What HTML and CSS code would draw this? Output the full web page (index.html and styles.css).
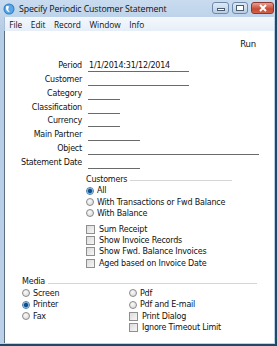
FILE: index.html
```html
<!DOCTYPE html>
<html>
<head>
<meta charset="utf-8">
<link rel="stylesheet" href="styles.css">
</head>
<body>
<div class="window">
  <div class="titlebar">
    <svg class="appicon" width="12" height="12" viewBox="0 0 12 12">
      <circle cx="6" cy="6" r="5.5" fill="#2f7fc8"/>
      <circle cx="6" cy="6" r="4.5" fill="#5aa6e6"/>
      <path d="M3.5 2.8 C2.2 5.5 3.4 9 7.2 9.3 C5.2 8 4.6 5.6 6.2 3.4 Z" fill="#ffffff"/>
    </svg>
    <span class="title">Specify Periodic Customer Statement</span>
    <div class="tbtns">
      <span class="tb tb-min"><i></i></span>
      <span class="tb tb-max"><i></i></span>
      <span class="tb tb-close">
        <svg width="10" height="8" viewBox="0 0 10 8"><path d="M2 1 L8 7 M8 1 L2 7" stroke="#fff" stroke-width="2"/></svg>
      </span>
    </div>
  </div>
  <div class="menubar">
    <span>File</span><span>Edit</span><span>Record</span><span>Window</span><span>Info</span>
  </div>
  <div class="client">
    <div class="toolbar"><span class="run">Run</span></div>
    <div class="form">
      <div class="row"><span class="lbl">Period</span><span class="fld w100">1/1/2014:31/12/2014</span></div>
      <div class="row"><span class="lbl">Customer</span><span class="fld w100"></span></div>
      <div class="row"><span class="lbl">Category</span><span class="fld w31"></span></div>
      <div class="row"><span class="lbl">Classification</span><span class="fld w31"></span></div>
      <div class="row"><span class="lbl">Currency</span><span class="fld w31"></span></div>
      <div class="row"><span class="lbl">Main Partner</span><span class="fld w52"></span></div>
      <div class="row"><span class="lbl">Object</span><span class="fld w171"></span></div>
      <div class="row"><span class="lbl">Statement Date</span><span class="fld w52"></span></div>
    </div>
    <div class="group cust">
      <div class="ghead"><span>Customers</span><i></i></div>
      <div class="opt"><span class="radio on"></span>All</div>
      <div class="opt"><span class="radio"></span>With Transactions or Fwd Balance</div>
      <div class="opt"><span class="radio"></span>With Balance</div>
      <div class="checks">
        <div class="opt"><span class="check"></span>Sum Receipt</div>
        <div class="opt"><span class="check"></span>Show Invoice Records</div>
        <div class="opt"><span class="check"></span>Show Fwd. Balance Invoices</div>
        <div class="opt"><span class="check"></span>Aged based on Invoice Date</div>
      </div>
    </div>
    <div class="group media">
      <div class="ghead"><span>Media</span><i></i></div>
      <div class="cols">
        <div class="col">
          <div class="opt"><span class="radio"></span>Screen</div>
          <div class="opt"><span class="radio on"></span>Printer</div>
          <div class="opt"><span class="radio"></span>Fax</div>
        </div>
        <div class="col">
          <div class="opt"><span class="radio"></span>Pdf</div>
          <div class="opt"><span class="radio"></span>Pdf and E-mail</div>
          <div class="opt"><span class="check"></span>Print Dialog</div>
          <div class="opt"><span class="check"></span>Ignore Timeout Limit</div>
        </div>
      </div>
    </div>
  </div>
</div>
</body>
</html>
```
FILE: styles.css
```css
* { box-sizing: border-box; }
html, body { margin: 0; padding: 0; }
body {
  width: 277px;
  height: 346px;
  overflow: hidden;
  font-family: Tahoma, "DejaVu Sans", sans-serif;
  font-size: 8px;
  letter-spacing: -0.2px;
  color: #111;
  background: #fff;
}
.window {
  width: 277px;
  height: 346px;
  background: linear-gradient(#c9dbef, #b6cde6 30px, #bcd1e8);
  border-right: 2px solid #1f4a66;
  border-bottom: 2px solid #1f4a66;
  display: flex;
  flex-direction: column;
  padding: 0 1px 1px 4px;
  position: relative;
}
.titlebar {
  height: 17px;
  display: flex;
  align-items: center;
  margin-left: -4px;
  padding-left: 3px;
}
.appicon { flex: none; }
.title {
  margin-left: 4px;
  font-family: "Open Sans", "DejaVu Sans", sans-serif;
  font-size: 8.8px;
  letter-spacing: -0.12px;
  color: #111;
}
.tbtns {
  margin-left: auto;
  display: flex;
  gap: 3px;
  align-self: flex-start;
  margin-top: 2px;
}
.tb {
  height: 12px;
  border: 1px solid #6f8aa8;
  border-radius: 3px;
  display: flex;
  align-items: center;
  justify-content: center;
  background: linear-gradient(#dfe9f5, #b9cde4);
}
.tb-min { width: 17px; }
.tb-min i { display: block; width: 8px; height: 3px; background: #fff; border: 1px solid #4a5d73; margin-top: 3px; }
.tb-max { width: 16px; }
.tb-max i { display: block; width: 8px; height: 6px; border: 1px solid #4a5d73; background: #fff; }
.tb-close { width: 23px; background: linear-gradient(#e8a08f, #c74a33 60%, #d0644a); border-color: #8a3a2d; }
.menubar {
  height: 14px;
  background: linear-gradient(#f4f8fc, #e6eef8);
  display: flex;
  align-items: center;
  padding-left: 0;
  font-family: "Open Sans", "DejaVu Sans", sans-serif;
  font-size: 8.3px;
  letter-spacing: -0.05px;
  border-left: 1px solid #a8bdd6;
}
.menubar span { padding: 0 4.3px; }
.client {
  flex: 1;
  background: #fff;
  border-left: 1px solid #5d6f82;
  display: flex;
  flex-direction: column;
}
.toolbar {
  height: 27px;
  display: flex;
  align-items: center;
  justify-content: flex-end;
  padding-right: 18px;
  padding-bottom: 2px;
  font-size: 8.5px;
}
.form { display: flex; flex-direction: column; }
.row { height: 13.9px; display: flex; align-items: flex-end; }
.lbl { width: 77px; text-align: right; padding-bottom: 1px; line-height: 10px; }
.fld {
  margin-left: 6px;
  height: 11px;
  border-bottom: 1px solid #6a6a6a;
  line-height: 10px;
  padding-left: 1px;
}
.w100 { width: 101px; }
.w31 { width: 32px; }
.w52 { width: 52px; }
.w171 { width: 171px; }
.group { display: flex; flex-direction: column; }
.cust { margin-left: 81px; margin-top: 4px; width: 146px; }
.ghead { display: flex; align-items: center; height: 12px; }
.ghead i { flex: 1; height: 1px; background: #d6d6d6; margin-left: 3px; margin-top: 3px; }
.opt { height: 11.3px; display: flex; align-items: center; white-space: nowrap; }
.checks { margin-top: 4.6px; }
.radio {
  width: 8px; height: 8px; border-radius: 50%;
  border: 1px solid #8a8a8a;
  background: radial-gradient(circle at 40% 35%, #fafafa, #d4d4d4);
  margin-right: 3px; flex: none;
}
.radio.on { background: radial-gradient(circle, #0d4f8f 0 1.6px, #3c8ad6 2.2px, #dfe9f3 3px); border-color: #4d7aa6; }
.check {
  width: 9px; height: 9px; border: 1px solid #8f8f8f;
  background: linear-gradient(135deg, #dcdcdc, #f6f6f6);
  margin-right: 4px; flex: none;
}
.media { margin-left: 17px; margin-top: 7px; width: 235px; }
.cols { display: flex; }
.col:first-child { width: 107px; }
```
